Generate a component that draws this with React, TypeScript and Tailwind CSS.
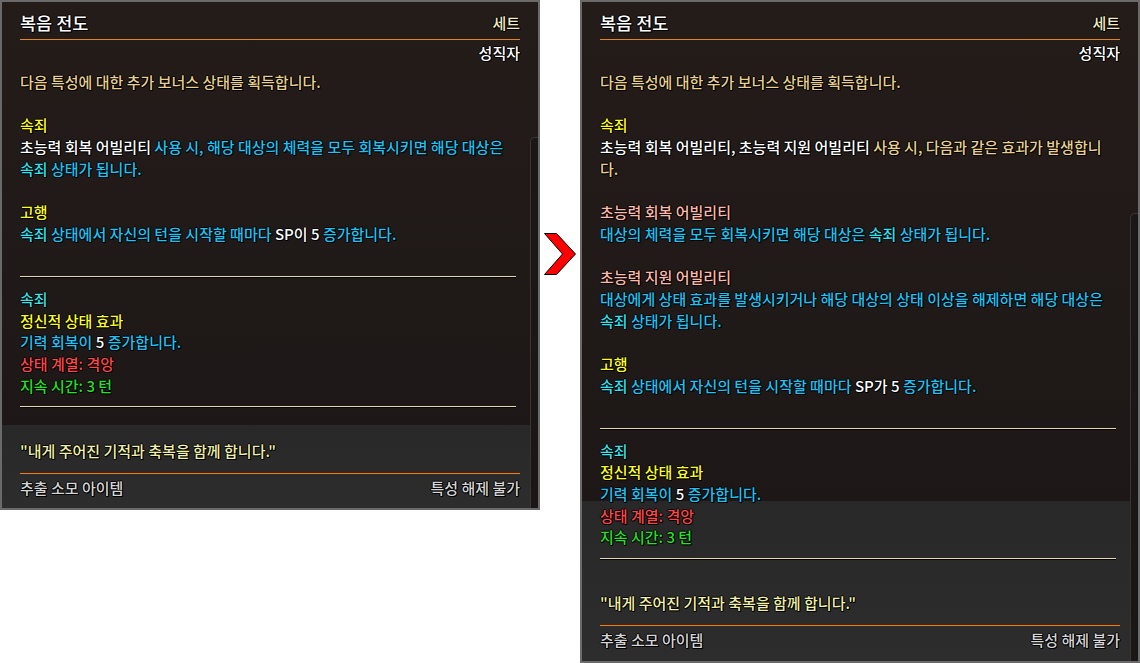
import React from "react";

type RowProps = { children?: React.ReactNode };

function Row({ children }: RowProps) {
  return <div className="h-[21.7px] leading-[21.7px] whitespace-nowrap">{children}</div>;
}

function Sep() {
  return (
    <div className="h-[21.7px] flex items-center">
      <div className="w-[calc(100%-4px)] border-t border-b border-t-[#e8d7a0] border-b-black" />
    </div>
  );
}

const Beige = ({ children }: RowProps) => <span className="text-[#e9d08f]">{children}</span>;
const Yellow = ({ children }: RowProps) => <span className="text-[#ffff1a]">{children}</span>;
const White = ({ children }: RowProps) => <span className="text-white">{children}</span>;
const Cyan = ({ children }: RowProps) => <span className="text-[#1cc4f4]">{children}</span>;
const Cyan2 = ({ children }: RowProps) => <span className="text-[#2ee4f4]">{children}</span>;
const Teal = ({ children }: RowProps) => <span className="text-[#3fe3e8]">{children}</span>;
const Red = ({ children }: RowProps) => <span className="text-[#ff4747]">{children}</span>;
const Green = ({ children }: RowProps) => <span className="text-[#27e027]">{children}</span>;
const Salmon = ({ children }: RowProps) => <span className="text-[#ffb9a8]">{children}</span>;

function Header() {
  return (
    <>
      <div className="flex justify-between items-center h-[22px] leading-[22px]">
        <span className="text-[17.5px] text-white">복음 전도</span>
        <span className="text-[15px] text-[#f4ecc0]">세트</span>
      </div>
      <div className="mt-[5px] border-t border-[#e0871f]" />
      <div className="mt-[2px] h-[22px] leading-[22px] text-right text-white">성직자</div>
    </>
  );
}

function Footer() {
  return (
    <>
      <div className="mt-[12px] border-t border-[#ff7a00]" />
      <div className="mt-[3px] h-[22px] leading-[22px] flex justify-between text-[#d6d6d6]">
        <span>추출 소모 아이템</span>
        <span>특성 해제 불가</span>
      </div>
    </>
  );
}

function Quote() {
  return (
    <Row>
      <span className="text-[#f2f0a8]">"내게 주어진 기적과 축복을 함께 합니다."</span>
    </Row>
  );
}

function LeftPanel() {
  return (
    <div className="relative w-[540px] h-[510px] shrink-0 border-2 border-[#6a6a6a] pt-[10px] px-[18px] bg-[linear-gradient(180deg,#241c19_0px,#1d1817_423px,#282828_423px,#2d2d2d_100%)]">
      <div className="absolute right-0 top-[135px] bottom-0 w-[8px] rounded-tl-[5px] border-l border-t border-[#3a3434] bg-[#1b1717]" />
      <Header />
      <div className="mt-[7px]">
        <Row><Beige>다음 특성에 대한 추가 보너스 상태를 획득합니다.</Beige></Row>
        <Row />
        <Row><Yellow>속죄</Yellow></Row>
        <Row>
          <White>초능력 회복 어빌리티</White> <Cyan>사용 시, 해당 대상의 체력을 모두 회복시키면 해당 대상은</Cyan>
        </Row>
        <Row>
          <Cyan2>속죄</Cyan2> <Cyan>상태가 됩니다.</Cyan>
        </Row>
        <Row />
        <Row><Yellow>고행</Yellow></Row>
        <Row>
          <Cyan2>속죄</Cyan2> <Cyan>상태에서 자신의 턴을 시작할 때마다</Cyan> <White>SP이 5</White> <Cyan>증가합니다.</Cyan>
        </Row>
        <Row />
        <Sep />
        <Row><Teal>속죄</Teal></Row>
        <Row><Yellow>정신적 상태 효과</Yellow></Row>
        <Row>
          <Cyan>기력 회복이</Cyan> <White>5</White> <Cyan>증가합니다.</Cyan>
        </Row>
        <Row><Red>상태 계열: 격앙</Red></Row>
        <Row><Green>지속 시간: 3 턴</Green></Row>
        <Sep />
        <Row />
        <Quote />
      </div>
      <Footer />
    </div>
  );
}

function RightPanel() {
  return (
    <div className="relative w-[560px] h-[663px] shrink-0 border-2 border-[#6a6a6a] pt-[10px] px-[18px] bg-[linear-gradient(180deg,#241c19_0px,#1d1817_499px,#282828_499px,#2d2d2d_100%)]">
      <div className="absolute right-0 top-[211px] bottom-0 w-[8px] rounded-tl-[5px] border-l border-t border-[#3a3434] bg-[#1b1717]" />
      <Header />
      <div className="mt-[7px]">
        <Row><Beige>다음 특성에 대한 추가 보너스 상태를 획득합니다.</Beige></Row>
        <Row />
        <Row><Yellow>속죄</Yellow></Row>
        <Row>
          <White>초능력 회복 어빌리티, 초능력 지원 어빌리티</White> <Beige>사용 시, 다음과 같은 효과가 발생합니</Beige>
        </Row>
        <Row><Beige>다.</Beige></Row>
        <Row />
        <Row><Salmon>초능력 회복 어빌리티</Salmon></Row>
        <Row>
          <Cyan>대상의 체력을 모두 회복시키면 해당 대상은</Cyan> <Cyan2>속죄</Cyan2> <Cyan>상태가 됩니다.</Cyan>
        </Row>
        <Row />
        <Row><Salmon>초능력 지원 어빌리티</Salmon></Row>
        <Row>
          <Cyan>대상에게 상태 효과를 발생시키거나 해당 대상의 상태 이상을 해제하면 해당 대상은</Cyan>
        </Row>
        <Row>
          <Cyan2>속죄</Cyan2> <Cyan>상태가 됩니다.</Cyan>
        </Row>
        <Row />
        <Row><Yellow>고행</Yellow></Row>
        <Row>
          <Cyan2>속죄</Cyan2> <Cyan>상태에서 자신의 턴을 시작할 때마다</Cyan> <White>SP가 5</White> <Cyan>증가합니다.</Cyan>
        </Row>
        <Row />
        <Sep />
        <Row><Teal>속죄</Teal></Row>
        <Row><Yellow>정신적 상태 효과</Yellow></Row>
        <Row>
          <Cyan>기력 회복이</Cyan> <White>5</White> <Cyan>증가합니다.</Cyan>
        </Row>
        <Row><Red>상태 계열: 격앙</Red></Row>
        <Row><Green>지속 시간: 3 턴</Green></Row>
        <Sep />
        <Row />
        <Quote />
      </div>
      <Footer />
    </div>
  );
}

function Arrow() {
  return (
    <div className="w-[40px] shrink-0 pt-[233px] pl-[4px]">
      <svg width="33" height="43" viewBox="0 0 33 43">
        <polygon points="0.5,0.5 12.5,0.5 31.5,21 12.5,41.5 0.5,41.5 18.5,21" fill="#ff0000" stroke="#000" strokeWidth="1" strokeLinejoin="miter" />
      </svg>
    </div>
  );
}

export default function App() {
  return (
    <div className="w-[1140px] h-[663px] bg-white flex items-start overflow-hidden font-['Noto_Sans_CJK_KR','Noto_Sans',sans-serif] font-medium text-[15px] [text-shadow:-1px_0_0_#000,1px_0_0_#000,0_-1px_0_#000,0_1px_0_#000,1px_1px_0_#000]">
      <LeftPanel />
      <Arrow />
      <RightPanel />
    </div>
  );
}
